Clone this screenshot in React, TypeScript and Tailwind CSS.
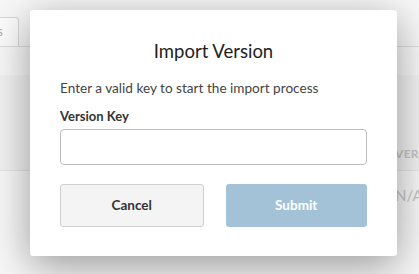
export default function App() {
  return (
    <div
      className="relative h-[274px] w-[419px] overflow-hidden bg-[#f7f7f7]"
      style={{ fontFamily: "Lato, 'Open Sans', sans-serif" }}
    >
      {/* page behind the dialog */}
      <div className="flex h-[47px] items-end border-b border-[#dcdcdc]">
        <div className="flex h-[29px] w-[19px] items-center justify-end rounded-tr-[4px] border-r border-t border-[#d6d6d6] bg-[#fbfbfb] pr-[15px] text-[13px] text-[#aaa]">
          s
        </div>
      </div>
      <div className="h-[28px]" />
      <div className="flex h-[96px] items-end justify-end border-b border-[#e6e6e6] bg-[#f1f1f1] pb-[7px]">
        <span className="w-[24px] overflow-hidden whitespace-nowrap text-[12px] font-bold tracking-wide text-[#c4c4c4]">
          VERSION
        </span>
      </div>
      <div className="flex h-[46px] items-center justify-end">
        <span className="w-[24px] overflow-hidden whitespace-nowrap pt-[2px] text-[15px] text-[#c4c4c4]">
          N/A
        </span>
      </div>

      {/* dialog */}
      <div className="absolute left-[30px] top-[10px] flex h-[246px] w-[367px] flex-col rounded-[3px] bg-white px-[30px] shadow-[0_10px_40px_rgba(0,0,0,0.38)]">
        <h2 className="mt-[30px] text-center text-[18.5px] leading-[22px] text-[#222]">
          Import Version
        </h2>
        <p className="mt-[17px] text-[13.6px] leading-[18px] text-[#444]">
          Enter a valid key to start the import process
        </p>
        <label className="mt-[11px] text-[13px] font-bold leading-[16px] text-[#333]">
          Version Key
        </label>
        <input
          className="mt-[5px] h-[36px] w-full rounded-[4px] border border-[#bdbdbd] bg-white px-2 text-[14px] outline-none"
          type="text"
        />
        <div className="mt-[19px] flex gap-[22px]">
          <button className="h-[43px] flex-1 rounded-[3px] border border-[#cfcfcf] bg-[#f4f4f4] text-[13.5px] font-bold text-[#333]">
            Cancel
          </button>
          <button className="h-[43px] flex-1 rounded-[3px] bg-[#a3c2d8] text-[13.5px] font-bold text-white">
            Submit
          </button>
        </div>
      </div>
    </div>
  );
}
